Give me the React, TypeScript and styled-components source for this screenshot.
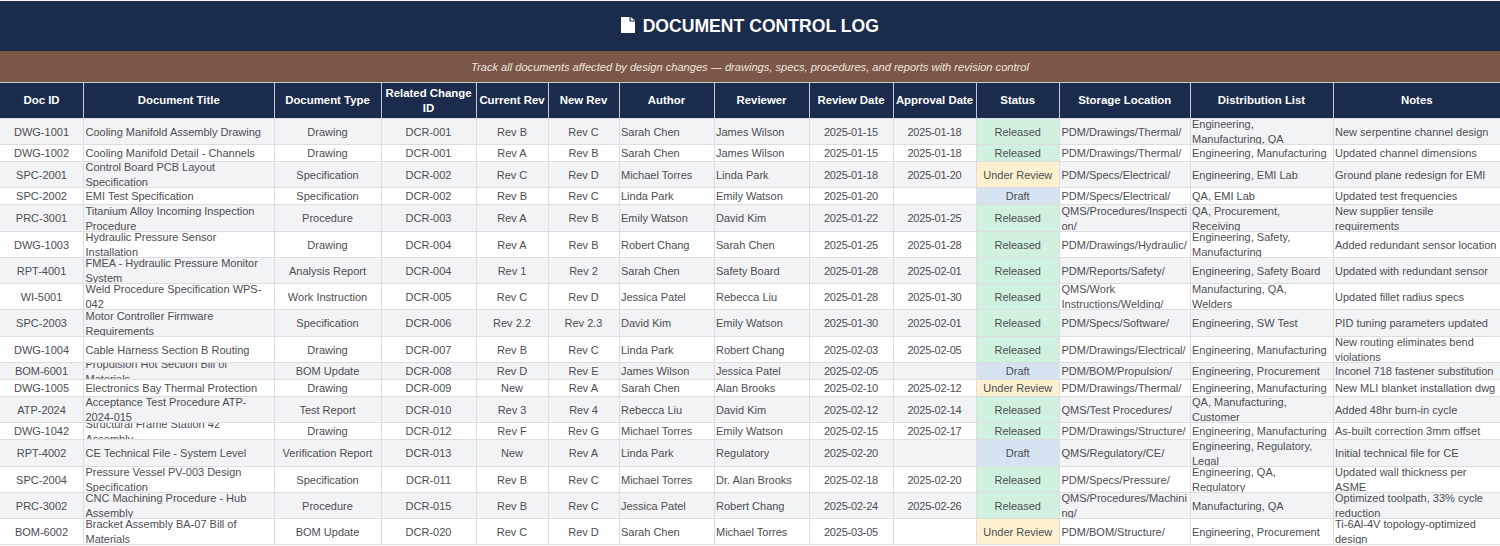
import React from "react";
import styled, { createGlobalStyle } from "styled-components";

const Global = createGlobalStyle`
  html, body { margin: 0; padding: 0; background: #fff; }
  body { font-family: "Liberation Sans", Arial, sans-serif; overflow: hidden; }
  #root { width: 1500px; height: 546px; overflow: hidden; }
`;

const Page = styled.main`
  width: 1500px;
  padding-top: 1px;
`;

const TitleBar = styled.h1`
  margin: 0;
  height: 50px;
  background: #1b2b4b;
  color: #fff;
  font-size: 17.6px;
  font-weight: 700;
  display: flex;
  align-items: center;
  justify-content: center;
  gap: 7.5px;
`;

const DocIcon = styled.svg`
  width: 14px;
  height: 16px;
  fill: #fff;
  margin-top: -2px;
`;

const SubtitleBar = styled.p`
  margin: 0;
  height: 31px;
  background: #7b5748;
  color: #eee5df;
  font-size: 11.1px;
  font-style: italic;
  display: flex;
  align-items: center;
  justify-content: center;
`;

const Table = styled.table`
  width: 1500px;
  table-layout: fixed;
  border-collapse: collapse;
`;

const HeadCell = styled.th`
  height: 35px;
  padding: 0;
  background: #1b2b4b;
  color: #fff;
  font-size: 11.4px;
  font-weight: 700;
  line-height: 14.3px;
  text-align: center;
  border: 1px solid #c4c9d2;
  border-bottom: 0;
  &:first-child { border-left: 0; }
  &:last-child { border-right: 0; }
`;

const Row = styled.tr<{ $odd: boolean }>`
  background: ${(p) => (p.$odd ? "#f2f3f5" : "#fff")};
`;

const Cell = styled.td<{ $bg?: string }>`
  padding: 0;
  border: 1px solid #dcdee1;
  background: ${(p) => p.$bg || "transparent"};
  &:first-child { border-left: 0; }
  &:last-child { border-right: 0; }
`;

const CellBox = styled.div<{ $h: number; $center: boolean; $date: boolean; $right: number }>`
  height: ${(p) => p.$h}px;
  overflow: hidden;
  display: flex;
  align-items: center;
  justify-content: ${(p) => (p.$center ? "center" : "flex-start")};
  text-align: ${(p) => (p.$center ? "center" : "left")};
  padding: 1px ${(p) => p.$right}px 0 1.5px;
  box-sizing: border-box;
  font-size: 11px;
  line-height: 14.6px;
  letter-spacing: ${(p) => (p.$date ? "-0.22px" : "0")};
  color: #4c4e52;
  overflow-wrap: anywhere;
`;

const cols = [83.5, 190.5, 107, 95, 72, 71, 95, 95, 84, 83, 83.5, 130.5, 143, 167];
const heads = ["Doc ID", "Document Title", "Document Type", "Related Change ID", "Current Rev", "New Rev", "Author", "Reviewer", "Review Date", "Approval Date", "Status", "Storage Location", "Distribution List", "Notes"];
const leftCols = new Set([1, 6, 7, 11, 12, 13]);
const dateCols = new Set([8, 9]);
const STORAGE_COL = 11;

const statusBg: Record<string, string> = {
  Released: "#d1f1df",
  "Under Review": "#fdf0cf",
  Draft: "#d6e3f0",
};

const rightPadding = (col: number) => {
  if (!leftCols.has(col)) return 1.5;
  return col === STORAGE_COL ? 2 : 3.5;
};

const rows: [number, string[]][] = [
  [25, ["DWG-1001", "Cooling Manifold Assembly Drawing", "Drawing", "DCR-001", "Rev B", "Rev C", "Sarah Chen", "James Wilson", "2025-01-15", "2025-01-18", "Released", "PDM/Drawings/Thermal/", "Engineering, Manufacturing, QA", "New serpentine channel design"]],
  [16, ["DWG-1002", "Cooling Manifold Detail - Channels", "Drawing", "DCR-001", "Rev A", "Rev B", "Sarah Chen", "James Wilson", "2025-01-15", "2025-01-18", "Released", "PDM/Drawings/Thermal/", "Engineering, Manufacturing", "Updated channel dimensions"]],
  [25, ["SPC-2001", "Control Board PCB Layout Specification", "Specification", "DCR-002", "Rev C", "Rev D", "Michael Torres", "Linda Park", "2025-01-18", "2025-01-20", "Under Review", "PDM/Specs/Electrical/", "Engineering, EMI Lab", "Ground plane redesign for EMI"]],
  [16, ["SPC-2002", "EMI Test Specification", "Specification", "DCR-002", "Rev B", "Rev C", "Linda Park", "Emily Watson", "2025-01-20", "", "Draft", "PDM/Specs/Electrical/", "QA, EMI Lab", "Updated test frequencies"]],
  [26, ["PRC-3001", "Titanium Alloy Incoming Inspection Procedure", "Procedure", "DCR-003", "Rev A", "Rev B", "Emily Watson", "David Kim", "2025-01-22", "2025-01-25", "Released", "QMS/Procedures/Inspection/", "QA, Procurement, Receiving", "New supplier tensile requirements"]],
  [25, ["DWG-1003", "Hydraulic Pressure Sensor Installation", "Drawing", "DCR-004", "Rev A", "Rev B", "Robert Chang", "Sarah Chen", "2025-01-25", "2025-01-28", "Released", "PDM/Drawings/Hydraulic/", "Engineering, Safety, Manufacturing", "Added redundant sensor location"]],
  [25, ["RPT-4001", "FMEA - Hydraulic Pressure Monitor System", "Analysis Report", "DCR-004", "Rev 1", "Rev 2", "Sarah Chen", "Safety Board", "2025-01-28", "2025-02-01", "Released", "PDM/Reports/Safety/", "Engineering, Safety Board", "Updated with redundant sensor"]],
  [25, ["WI-5001", "Weld Procedure Specification WPS-042", "Work Instruction", "DCR-005", "Rev C", "Rev D", "Jessica Patel", "Rebecca Liu", "2025-01-28", "2025-01-30", "Released", "QMS/Work Instructions/Welding/", "Manufacturing, QA, Welders", "Updated fillet radius specs"]],
  [26, ["SPC-2003", "Motor Controller Firmware Requirements", "Specification", "DCR-006", "Rev 2.2", "Rev 2.3", "David Kim", "Emily Watson", "2025-01-30", "2025-02-01", "Released", "PDM/Specs/Software/", "Engineering, SW Test", "PID tuning parameters updated"]],
  [25, ["DWG-1004", "Cable Harness Section B Routing", "Drawing", "DCR-007", "Rev B", "Rev C", "Linda Park", "Robert Chang", "2025-02-03", "2025-02-05", "Released", "PDM/Drawings/Electrical/", "Engineering, Manufacturing", "New routing eliminates bend violations"]],
  [16, ["BOM-6001", "Propulsion Hot Section Bill of Materials", "BOM Update", "DCR-008", "Rev D", "Rev E", "James Wilson", "Jessica Patel", "2025-02-05", "", "Draft", "PDM/BOM/Propulsion/", "Engineering, Procurement", "Inconel 718 fastener substitution"]],
  [16, ["DWG-1005", "Electronics Bay Thermal Protection", "Drawing", "DCR-009", "New", "Rev A", "Sarah Chen", "Alan Brooks", "2025-02-10", "2025-02-12", "Under Review", "PDM/Drawings/Thermal/", "Engineering, Manufacturing", "New MLI blanket installation dwg"]],
  [25, ["ATP-2024", "Acceptance Test Procedure ATP-2024-015", "Test Report", "DCR-010", "Rev 3", "Rev 4", "Rebecca Liu", "David Kim", "2025-02-12", "2025-02-14", "Released", "QMS/Test Procedures/", "QA, Manufacturing, Customer", "Added 48hr burn-in cycle"]],
  [16, ["DWG-1042", "Structural Frame Station 42 Assembly", "Drawing", "DCR-012", "Rev F", "Rev G", "Michael Torres", "Emily Watson", "2025-02-15", "2025-02-17", "Released", "PDM/Drawings/Structure/", "Engineering, Manufacturing", "As-built correction 3mm offset"]],
  [26, ["RPT-4002", "CE Technical File - System Level", "Verification Report", "DCR-013", "New", "Rev A", "Linda Park", "Regulatory", "2025-02-20", "", "Draft", "QMS/Regulatory/CE/", "Engineering, Regulatory, Legal", "Initial technical file for CE"]],
  [25, ["SPC-2004", "Pressure Vessel PV-003 Design Specification", "Specification", "DCR-011", "Rev B", "Rev C", "Michael Torres", "Dr. Alan Brooks", "2025-02-18", "2025-02-20", "Released", "PDM/Specs/Pressure/", "Engineering, QA, Regulatory", "Updated wall thickness per ASME"]],
  [25, ["PRC-3002", "CNC Machining Procedure - Hub Assembly", "Procedure", "DCR-015", "Rev B", "Rev C", "Jessica Patel", "Robert Chang", "2025-02-24", "2025-02-26", "Released", "QMS/Procedures/Machining/", "Manufacturing, QA", "Optimized toolpath, 33% cycle reduction"]],
  [25, ["BOM-6002", "Bracket Assembly BA-07 Bill of Materials", "BOM Update", "DCR-020", "Rev C", "Rev D", "Sarah Chen", "Michael Torres", "2025-03-05", "", "Under Review", "PDM/BOM/Structure/", "Engineering, Procurement", "Ti-6Al-4V topology-optimized design"]],
];

export default function App() {
  return (
    <Page>
      <Global />
      <TitleBar>
        <DocIcon viewBox="0 0 14 16">
          <path d="M0 0h8.5v4.6H14V16H0z" />
          <path d="M9.7 0L14 3.5H9.7z" />
        </DocIcon>
        DOCUMENT CONTROL LOG
      </TitleBar>
      <SubtitleBar>Track all documents affected by design changes — drawings, specs, procedures, and reports with revision control</SubtitleBar>
      <Table>
        <colgroup>
          {cols.map((w, i) => (
            <col key={i} style={{ width: w }} />
          ))}
        </colgroup>
        <thead>
          <tr>
            {heads.map((h) => (
              <HeadCell key={h}>{h}</HeadCell>
            ))}
          </tr>
        </thead>
        <tbody>
          {rows.map(([h, cells], r) => (
            <Row key={r} $odd={r % 2 === 0}>
              {cells.map((c, i) => (
                <Cell key={i} $bg={i === 10 ? statusBg[c] : undefined}>
                  <CellBox $h={h} $center={!leftCols.has(i)} $date={dateCols.has(i)} $right={rightPadding(i)}>
                    <span>{c}</span>
                  </CellBox>
                </Cell>
              ))}
            </Row>
          ))}
        </tbody>
      </Table>
    </Page>
  );
}
